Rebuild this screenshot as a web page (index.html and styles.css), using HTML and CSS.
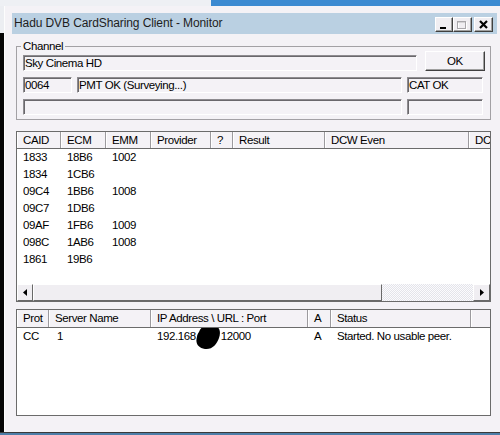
FILE: index.html
```html
<!DOCTYPE html>
<html>
<head>
<meta charset="utf-8">
<link rel="stylesheet" href="styles.css">
</head>
<body>
<div class="screen">
  <div class="topstrip"><div class="ts-left"></div><div class="ts-right"></div></div>
  <div class="main">
    <div class="edge"></div>
    <div class="window">
      <div class="titlebar">
        <span class="title">Hadu DVB CardSharing Client - Monitor</span>
        <div class="tbtns">
          <div class="tbtn t-min"><svg width="16" height="13" viewBox="0 0 16 13"><rect x="4" y="9" width="6" height="2" fill="#000"/></svg></div>
          <div class="tbtn t-max"><svg width="17" height="13" viewBox="0 0 17 13"><rect x="4.5" y="4.5" width="8" height="7" fill="none" stroke="#fff"/><rect x="3.5" y="3.5" width="8" height="7" fill="none" stroke="#a9a7ab"/><rect x="3" y="3" width="9" height="1.5" fill="#a9a7ab"/></svg></div>
          <div class="tbtn t-close"><svg width="17" height="13" viewBox="0 0 17 13"><path d="M5 3 L12 10 M12 3 L5 10" stroke="#000" stroke-width="2.2" fill="none"/></svg></div>
        </div>
      </div>
      <div class="client">
        <fieldset class="group">
          <legend>Channel</legend>
          <div class="grow r1">
            <div class="field f-name">Sky Cinema HD</div>
            <button class="btn">OK</button>
          </div>
          <div class="grow r2">
            <div class="field f-sid">0064</div>
            <div class="field f-pmt">PMT OK (Surveying...)</div>
            <div class="field f-cat">CAT OK</div>
          </div>
          <div class="grow r3">
            <div class="field f-wide"></div>
            <div class="field f-cat"></div>
          </div>
        </fieldset>

        <div class="list list-ecm">
          <div class="lhead cols-ecm">
            <div class="c">CAID</div><div class="c">ECM</div><div class="c">EMM</div><div class="c">Provider</div><div class="c">?</div><div class="c">Result</div><div class="c">DCW Even</div><div class="c">DCW Odd</div>
          </div>
          <div class="lbody">
            <div class="row cols-ecm"><div class="c">1833</div><div class="c">18B6</div><div class="c">1002</div></div>
            <div class="row cols-ecm"><div class="c">1834</div><div class="c">1CB6</div><div class="c"></div></div>
            <div class="row cols-ecm"><div class="c">09C4</div><div class="c">1BB6</div><div class="c">1008</div></div>
            <div class="row cols-ecm"><div class="c">09C7</div><div class="c">1DB6</div><div class="c"></div></div>
            <div class="row cols-ecm"><div class="c">09AF</div><div class="c">1FB6</div><div class="c">1009</div></div>
            <div class="row cols-ecm"><div class="c">098C</div><div class="c">1AB6</div><div class="c">1008</div></div>
            <div class="row cols-ecm"><div class="c">1861</div><div class="c">19B6</div><div class="c"></div></div>
          </div>
          <div class="hscroll">
            <div class="sbtn s-left"><svg width="4" height="7" viewBox="0 0 4 7"><polygon points="4,0 0,3.5 4,7" fill="#000"/></svg></div>
            <div class="thumb"></div>
            <div class="track"></div>
            <div class="sbtn s-right"><svg width="4" height="7" viewBox="0 0 4 7"><polygon points="0,0 4,3.5 0,7" fill="#000"/></svg></div>
          </div>
        </div>

        <div class="list list-srv">
          <div class="lhead cols-srv">
            <div class="c">Prot</div><div class="c">Server Name</div><div class="c">IP Address \ URL : Port</div><div class="c">A</div><div class="c">Status</div><div class="c"></div>
          </div>
          <div class="lbody">
            <div class="row cols-srv">
              <div class="c">CC</div>
              <div class="c">1</div>
              <div class="c">192.168<svg class="blob" width="26" height="27" viewBox="0 0 26 27"><path d="M4 9 C6 3 13 0 19 2 C25 4 26 9 24 15 C22 21 17 27 10 26 C3 25 0 20 2 14 C2 12 3 10 4 9 Z" fill="#000"/></svg>12000</div>
              <div class="c">A</div>
              <div class="c">Started. No usable peer.</div>
              <div class="c"></div>
            </div>
          </div>
        </div>
      </div>
    </div>
  </div>
  <div class="bottomstrip"></div>
</div>
</body>
</html>
```

FILE: styles.css
```css
* { box-sizing: border-box; }
html, body { margin: 0; padding: 0; }
body {
  width: 500px;
  height: 435px;
  overflow: hidden;
  background: #000;
  font-family: "Liberation Sans", Arial, sans-serif;
  font-size: 11.5px;
  letter-spacing: -0.4px;
  color: #000;
}
.screen {
  width: 500px;
  height: 435px;
  display: flex;
  flex-direction: column;
  overflow: hidden;
}
.topstrip { height: 6px; flex: none; display: flex; }
.ts-left { width: 211px; background: #eef0f4; }
.ts-right { flex: 1; background: #3b8ad1; }
.main { height: 426px; flex: none; display: flex; overflow: hidden; }
.edge { width: 4px; flex: none; background: linear-gradient(#eceef2 0 27px, #050505 27px); }
.window {
  flex: none;
  width: 510px;
  background: #f4f2f6;
  border-left: 1px solid #fdfdfd;
  padding: 7px 0 0 7px;
}
.titlebar {
  width: 485px;
  height: 21px;
  background: #bad0e2;
  display: flex;
  align-items: flex-start;
  padding: 0 4px 0 2px;
}
.title {
  flex: 1;
  font-size: 12px;
  letter-spacing: -0.1px;
  line-height: 21px;
  color: #1d1d1d;
}
.tbtns { display: flex; margin-top: 4px; }
.tbtn {
  width: 18px;
  height: 15px;
  background: #f0eef2;
  border: 1px solid;
  border-color: #fff #404040 #404040 #fff;
  box-shadow: inset -1px -1px #a0a0a0;
  display: flex;
}
.t-max { width: 19px; }
.t-close { width: 19px; margin-left: 2px; }

.client { padding-left: 4px; }

.group {
  margin: 5px 0 0;
  width: 475px;
  padding: 0 5px 4px 6px;
  border: 1px solid #a3a1a5;
}
.group legend {
  padding: 0 2px;
  margin-left: -2px;
  line-height: 14px;
}
.grow { display: flex; align-items: flex-start; }
.r1 { margin-top: -2px; height: 20px; }
.r2, .r3 { margin-top: 6px; gap: 5px; }
.field {
  height: 16px;
  border: 1px solid;
  border-color: #8e8c90 #fff #fff #8e8c90;
  box-shadow: inset 1px 1px #6a686c;
  line-height: 14px;
  padding: 0 0 0 1px;
  white-space: nowrap;
  overflow: hidden;
}
.f-name { width: 394px; margin-top: 4px; }
.f-sid { width: 49px; }
.f-pmt { width: 325px; }
.f-cat { width: 76px; }
.f-wide { width: 379px; }
.btn {
  margin-left: 8px;
  width: 60px;
  height: 20px;
  font: inherit;
  letter-spacing: inherit;
  color: #000;
  background: #f4f2f6;
  border: 1px solid;
  border-color: #fff #404040 #404040 #fff;
  box-shadow: inset -1px -1px #a0a0a0;
  padding: 0;
  line-height: 18px;
  text-align: center;
}

.list {
  width: 475px;
  border: 1px solid #6b6b6b;
  background: #fff;
  display: flex;
  flex-direction: column;
  overflow: hidden;
}
.list-ecm { height: 171px; margin-top: 11px; }
.list-srv { height: 107px; margin-top: 7px; }
.cols-ecm { display: grid; grid-template-columns: 44px 45px 45px 60px 22px 92px 144px 60px; }
.cols-srv { display: grid; grid-template-columns: 32px 102px 157px 23px 140px 30px; }
.lhead {
  flex: none;
  height: 17px;
  background: #f4f2f6;
  border-bottom: 1px solid #6b6b6b;
}
.list-srv .lhead { height: 18px; }
.lhead .c {
  border-right: 1px solid #9c9a9e;
  box-shadow: inset 1px 0 #fff;
  line-height: 16px;
  padding-left: 6px;
  white-space: nowrap;
  overflow: hidden;
}
.list-srv .lhead .c { line-height: 17px; }
.lbody { flex: 1; overflow: hidden; }
.row .c {
  padding-left: 6px;
  line-height: 17px;
  height: 17px;
  white-space: nowrap;
}
.list-srv .row .c:nth-child(2) { padding-left: 8px; }
.blob { vertical-align: middle; margin: -6px 0 -5px -1px; }

.hscroll { flex: none; height: 17px; display: flex; }
.sbtn {
  width: 16px;
  background: #f0eef2;
  border: 1px solid;
  border-color: #fff #696969 #696969 #fff;
  display: flex;
  align-items: center;
  justify-content: center;
}
.s-right { width: 17px; }
.thumb {
  width: 349px;
  background: #f0eef2;
  border: 1px solid;
  border-color: #fff #696969 #696969 #fff;
}
.track {
  flex: 1;
  background-color: #fbfbfd;
  background-image: conic-gradient(#e4e4ea 25%, transparent 0 50%, #e4e4ea 0 75%, transparent 0);
  background-size: 2px 2px;
}
.bottomstrip {
  flex: none;
  height: 3px;
  border-top: 1px solid #3a3a3a;
  background: #4d7ea8;
}
```
